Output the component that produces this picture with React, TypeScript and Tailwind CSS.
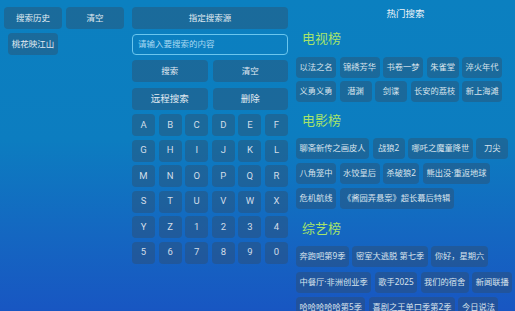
import React from 'react';

const cjk = { fontFamily: '"Noto Sans", "Noto Sans CJK SC", sans-serif' };

const keys = [
  'A', 'B', 'C', 'D', 'E', 'F',
  'G', 'H', 'I', 'J', 'K', 'L',
  'M', 'N', 'O', 'P', 'Q', 'R',
  'S', 'T', 'U', 'V', 'W', 'X',
  'Y', 'Z', '1', '2', '3', '4',
  '5', '6', '7', '8', '9', '0',
];

const sections = [
  {
    title: '电视榜',
    gap: 'gap-y-[3px]',
    top: 'mt-[10px]',
    items: ['以法之名', '锦绣芳华', '书卷一梦', '朱雀堂', '淬火年代', '义勇义勇', '潜渊', '剑谍', '长安的荔枝', '新上海滩'],
  },
  {
    title: '电影榜',
    gap: 'gap-y-[4px]',
    top: 'mt-[10px]',
    items: ['聊斋新传之画皮人', '战狼2', '哪吒之魔童降世', '刀尖', '八角笼中', '水饺皇后', '杀破狼2', '熊出没·重返地球', '危机航线', '《酱园弄悬案》超长幕后特辑'],
  },
  {
    title: '综艺榜',
    gap: 'gap-y-[4.5px]',
    top: 'mt-[10.5px]',
    items: ['奔跑吧第9季', '密室大逃脱 第七季', '你好，星期六', '中餐厅·非洲创业季', '歌手2025', '我们的宿舍', '新闻联播', '哈哈哈哈哈第5季', '喜剧之王单口季第2季', '今日说法'],
  },
];

const Btn: React.FC<{ label: string; className?: string }> = ({ label, className = '' }) => (
  <div
    className={`flex h-[22px] items-center justify-center rounded-[4px] bg-[#324a63]/40 text-[8.5px] text-[#e2ebf2] ${className}`}
    style={cjk}
  >
    {label}
  </div>
);

export default function App() {
  return (
    <div className="flex h-[311px] w-[515px] overflow-hidden bg-[linear-gradient(180deg,#0b80c0_0%,#0c7dc0_45%,#1467c1_75%,#1856c2_100%)]">
      {/* 搜索历史 */}
      <div className="w-[132px] shrink-0 pl-[4px] pt-[7px]">
        <div className="flex gap-[4px]">
          <Btn label="搜索历史" className="w-[58px]" />
          <Btn label="清空" className="w-[58px]" />
        </div>
        <div className="mt-[4px] pl-[4px]">
          <Btn label="桃花映江山" className="w-[50px]" />
        </div>
      </div>

      {/* 搜索 + 键盘 */}
      <div className="flex w-[156px] shrink-0 flex-col pt-[7px]">
        <Btn label="指定搜索源" />
        <div
          className="mt-[5px] flex h-[21px] items-center rounded-[4px] border border-[#6ac6ee] pl-[5px] text-[8.5px] text-[#a9d9f2]"
          style={cjk}
        >
          请输入要搜索的内容
        </div>
        <div className="mt-[5px] grid grid-cols-2 gap-x-[5px]">
          <Btn label="搜索" />
          <Btn label="清空" />
        </div>
        <div className="mt-[6px] grid grid-cols-2 gap-x-[5px]">
          <Btn label="远程搜索" className="text-[9.5px]" />
          <Btn label="删除" className="text-[9.5px]" />
        </div>
        <div className="mt-[4px] grid grid-cols-6 gap-x-[3.6px] gap-y-[3.5px]">
          {keys.map((k) => (
            <div
              key={k}
              className="flex h-[22px] items-center justify-center rounded-[4px] bg-[#324a63]/40 font-['Roboto',sans-serif] text-[9.5px] text-[#d2dde8]"
            >
              {k}
            </div>
          ))}
        </div>
      </div>

      {/* 热门搜索 */}
      <div className="ml-[8px] w-[219px] shrink-0 pt-[8px]" style={cjk}>
        <div className="text-center text-[9.5px] leading-[12px] text-[#eef4f8]">热门搜索</div>
        {sections.map((s) => (
          <div key={s.title} className={s.top}>
            <div className="mb-[10.5px] pl-[6px] text-[13px] leading-[16px] text-[#a6e36c]">{s.title}</div>
            <div className={`flex flex-wrap gap-x-[3.5px] ${s.gap}`}>
              {s.items.map((t) => (
                <div
                  key={t}
                  className="flex h-[21px] min-w-[32px] items-center justify-center rounded-[4px] bg-[#324a63]/40 px-[3.5px] text-[8.25px] text-[#d8e3ec]"
                >
                  {t}
                </div>
              ))}
            </div>
          </div>
        ))}
      </div>
    </div>
  );
}
